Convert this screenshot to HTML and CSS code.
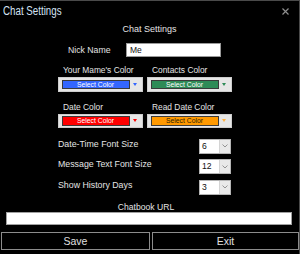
FILE: index.html
```html
<!DOCTYPE html>
<html lang="en">
  <head>
    <meta charset="UTF-8" />
    <meta name="viewport" content="width=device-width, initial-scale=1.0" />
    <title>Chat Settings</title>
    <link rel="stylesheet" href="styles.css">
  </head>
  <body>
    <div class="window">
      <div class="titlebar">
        <span class="title">Chat Settings</span>
        <svg class="close" width="7" height="7" viewBox="0 0 7 7">
          <path d="M0.5 0.5 L6.5 6.5 M6.5 0.5 L0.5 6.5" stroke="#8e8e8e" stroke-width="1.2" />
        </svg>
      </div>

      <div class="subtitle">Chat Settings</div>

      <div class="nick-row">
        <label class="nick-label" for="nick">Nick Name</label>
        <input class="nick-input" id="nick" type="text" value="Me" />
      </div>

      <div class="colors">
        <div class="color-field">
          <div class="color-label">Your Mame's Color</div>
          <div class="color-picker">
            <span class="swatch swatch-blue">Select Color</span>
            <span class="arrow arrow-blue"></span>
          </div>
        </div>
        <div class="color-field">
          <div class="color-label">Contacts Color</div>
          <div class="color-picker">
            <span class="swatch swatch-green">Select Color</span>
            <span class="arrow arrow-green"></span>
          </div>
        </div>
        <div class="color-field">
          <div class="color-label">Date Color</div>
          <div class="color-picker">
            <span class="swatch swatch-red">Select Color</span>
            <span class="arrow arrow-red"></span>
          </div>
        </div>
        <div class="color-field">
          <div class="color-label">Read Date Color</div>
          <div class="color-picker">
            <span class="swatch swatch-orange">Select Color</span>
            <span class="arrow arrow-orange"></span>
          </div>
        </div>
      </div>

      <div class="sizes">
        <div class="size-row">
          <span class="size-label">Date-Time Font Size</span>
          <div class="combo">
            <span class="combo-value">6</span>
            <span class="combo-btn">
              <svg width="6" height="4" viewBox="0 0 6 4"><path d="M0.5 0.5 L3 3 L5.5 0.5" fill="none" stroke="#8a8a8a" stroke-width="0.9" /></svg>
            </span>
          </div>
        </div>
        <div class="size-row">
          <span class="size-label">Message Text Font Size</span>
          <div class="combo">
            <span class="combo-value">12</span>
            <span class="combo-btn">
              <svg width="6" height="4" viewBox="0 0 6 4"><path d="M0.5 0.5 L3 3 L5.5 0.5" fill="none" stroke="#8a8a8a" stroke-width="0.9" /></svg>
            </span>
          </div>
        </div>
        <div class="size-row">
          <span class="size-label">Show History Days</span>
          <div class="combo">
            <span class="combo-value">3</span>
            <span class="combo-btn">
              <svg width="6" height="4" viewBox="0 0 6 4"><path d="M0.5 0.5 L3 3 L5.5 0.5" fill="none" stroke="#8a8a8a" stroke-width="0.9" /></svg>
            </span>
          </div>
        </div>
      </div>

      <div class="url-label">Chatbook URL</div>
      <input class="url-input" type="text" value="" />

      <div class="buttons">
        <button type="button" class="btn">Save</button>
        <button type="button" class="btn">Exit</button>
      </div>
    </div>
  </body>
</html>
```

FILE: styles.css
```css
body {
  margin: 0;
  background: #000;
  font-family: "Liberation Sans", Arial, sans-serif;
  color: #e4e4e4;
}
.window {
  width: 300px;
  height: 254px;
  box-sizing: border-box;
  border-top: 1px solid #4a4a4a;
  border-right: 1px solid #4a4a4a;
  background: #000;
}
.titlebar {
  height: 19px;
  display: flex;
  justify-content: space-between;
  align-items: center;
  padding: 0 10px 0 3px;
}
.title {
  display: inline-block;
  font-size: 12.5px;
  color: #d4e2f4;
  transform: scaleX(0.78);
  transform-origin: left center;
}
.close {
  display: block;
  margin-top: 1px;
}
.subtitle {
  margin-top: 4px;
  text-align: center;
  font-size: 9px;
  line-height: 10px;
}
.nick-row {
  display: flex;
  align-items: center;
  margin-top: 9px;
  height: 14px;
}
.nick-label {
  width: 58px;
  padding-left: 68px;
  font-size: 8.7px;
}
.nick-input {
  width: 95px;
  height: 14px;
  box-sizing: border-box;
  margin: 0;
  padding: 0 0 0 3px;
  border: 1px solid #9a9a9a;
  background: #fff;
  font-family: "Liberation Sans", Arial, sans-serif;
  font-size: 8.5px;
  color: #111;
}
.colors {
  display: grid;
  grid-template-columns: 85px 85px;
  column-gap: 4px;
  row-gap: 10px;
  margin: 8px 0 0 58px;
}
.color-label {
  padding-left: 5px;
  font-size: 8.4px;
  line-height: 10px;
}
.color-picker {
  margin-top: 2px;
  height: 14.5px;
  box-sizing: border-box;
  display: flex;
  align-items: center;
  padding-left: 2.5px;
  background: #e6e6e6;
  border: 1px solid #cdcdcd;
}
.swatch {
  width: 68px;
  height: 9.5px;
  box-sizing: border-box;
  border: 1px solid #3a3a3a;
  font-size: 6.8px;
  line-height: 7.5px;
  text-align: center;
  color: #fff;
}
.swatch-blue { background: #3366ff; }
.swatch-green { background: #2e8b57; }
.swatch-red { background: #ff0000; }
.swatch-orange { background: #ff9900; color: #2a1c00; }
.arrow {
  margin-left: 3px;
  width: 0;
  height: 0;
  border-left: 2.7px solid transparent;
  border-right: 2.7px solid transparent;
  border-top: 3px solid #3366ff;
}
.arrow-green { border-top-color: #2e8b57; }
.arrow-red { border-top-color: #ff0000; }
.arrow-orange { border-top-color: #ffb040; }
.sizes {
  margin: 10.5px 0 0 58px;
  width: 173px;
  display: flex;
  flex-direction: column;
  gap: 5.5px;
}
.size-row {
  display: flex;
  justify-content: space-between;
  align-items: flex-start;
  height: 15px;
}
.size-label {
  font-size: 8.8px;
  line-height: 10px;
}
.combo {
  width: 32px;
  height: 15px;
  box-sizing: border-box;
  display: flex;
  border: 1px solid #b4b4b4;
  background: #fff;
}
.combo-value {
  flex: 1;
  padding-left: 2px;
  font-size: 8.6px;
  line-height: 13px;
  color: #111;
}
.combo-btn {
  width: 10px;
  display: flex;
  align-items: center;
  justify-content: center;
  background: #e9e9e9;
  border-left: 1px solid #d4d4d4;
}
.url-label {
  margin-top: 7px;
  padding-right: 7px;
  text-align: center;
  font-size: 8.6px;
  line-height: 10px;
}
.url-input {
  display: block;
  width: 286px;
  height: 13.5px;
  box-sizing: border-box;
  margin: 0 0 0 6px;
  padding: 0;
  border: 1px solid #a0a0a0;
  background: #fff;
}
.buttons {
  display: flex;
  gap: 2px;
  margin-top: 6.5px;
  padding-left: 1px;
}
.btn {
  width: 149px;
  height: 18.5px;
  box-sizing: border-box;
  margin: 0;
  padding: 0;
  background: #000;
  border: 1px solid #8c8c8c;
  color: #e0e0e0;
  font-family: "Liberation Sans", Arial, sans-serif;
  font-size: 10.5px;
}
.btn + .btn {
  width: 147px;
}
```
